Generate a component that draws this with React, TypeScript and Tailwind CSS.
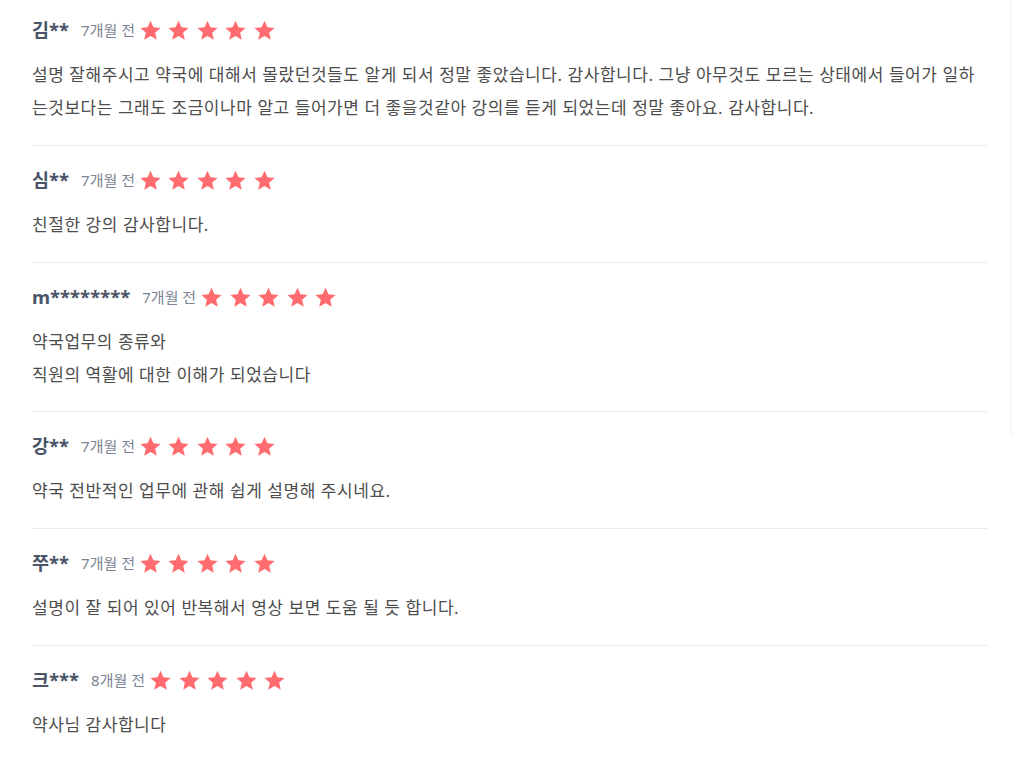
const reviews = [
  {
    name: "김**",
    date: "7개월 전",
    lines: [
      "설명 잘해주시고 약국에 대해서 몰랐던것들도 알게 되서 정말 좋았습니다. 감사합니다. 그냥 아무것도 모르는 상태에서 들어가 일하는것보다는 그래도 조금이나마 알고 들어가면 더 좋을것같아 강의를 듣게 되었는데 정말 좋아요. 감사합니다.",
    ],
  },
  { name: "심**", date: "7개월 전", lines: ["친절한 강의 감사합니다."] },
  {
    name: "m********",
    date: "7개월 전",
    lines: ["약국업무의 종류와", "직원의 역활에 대한 이해가 되었습니다"],
  },
  { name: "강**", date: "7개월 전", lines: ["약국 전반적인 업무에 관해 쉽게 설명해 주시네요."] },
  { name: "쭈**", date: "7개월 전", lines: ["설명이 잘 되어 있어 반복해서 영상 보면 도움 될 듯 합니다."] },
  { name: "크***", date: "8개월 전", lines: ["약사님 감사합니다"] },
];

const Star = () => (
  <svg viewBox="0 0 24 24" className="h-[23px] w-[23px]" fill="#ff6b6f">
    <path d="M12 1.8l3.05 6.9 7.45.7-5.65 4.95 1.7 7.35L12 17.85 5.45 21.7l1.7-7.35L1.5 9.4l7.45-.7z" />
  </svg>
);

export default function App() {
  return (
    <div
      className="relative min-h-[760px] bg-white px-[32px] pt-[1px]"
      style={{ fontFamily: '"Noto Sans", "Noto Sans CJK KR", sans-serif' }}
    >
      <div className="w-[956px]">
        {reviews.map((r, i) => (
          <div
            key={i}
            className={`border-b border-[#ececec] last:border-b-0 ${i === 0 ? "pt-[15px]" : "pt-[20px]"} ${r.lines.length > 1 && i > 0 ? "pb-[20px]" : "pb-[21px]"}`}
          >
            <div className="flex h-[28px] items-center">
              <span className="text-[18.5px] font-bold text-[#4a5568]">{r.name}</span>
              <span className="ml-[12px] text-[15px] text-[#7b8494]">{r.date}</span>
              <div className="ml-[4px] flex gap-[5.5px]">
                <Star />
                <Star />
                <Star />
                <Star />
                <Star />
              </div>
            </div>
            <div className="mt-[14px] text-[17px] leading-[33px] tracking-[0.55px] text-[#4d4d4d]">
              {r.lines.map((l, j) => (
                <p key={j}>{l}</p>
              ))}
            </div>
          </div>
        ))}
      </div>
      <div className="absolute right-0 top-0 h-[435px] w-[2px] bg-[#f6f6f6]" />
    </div>
  );
}
